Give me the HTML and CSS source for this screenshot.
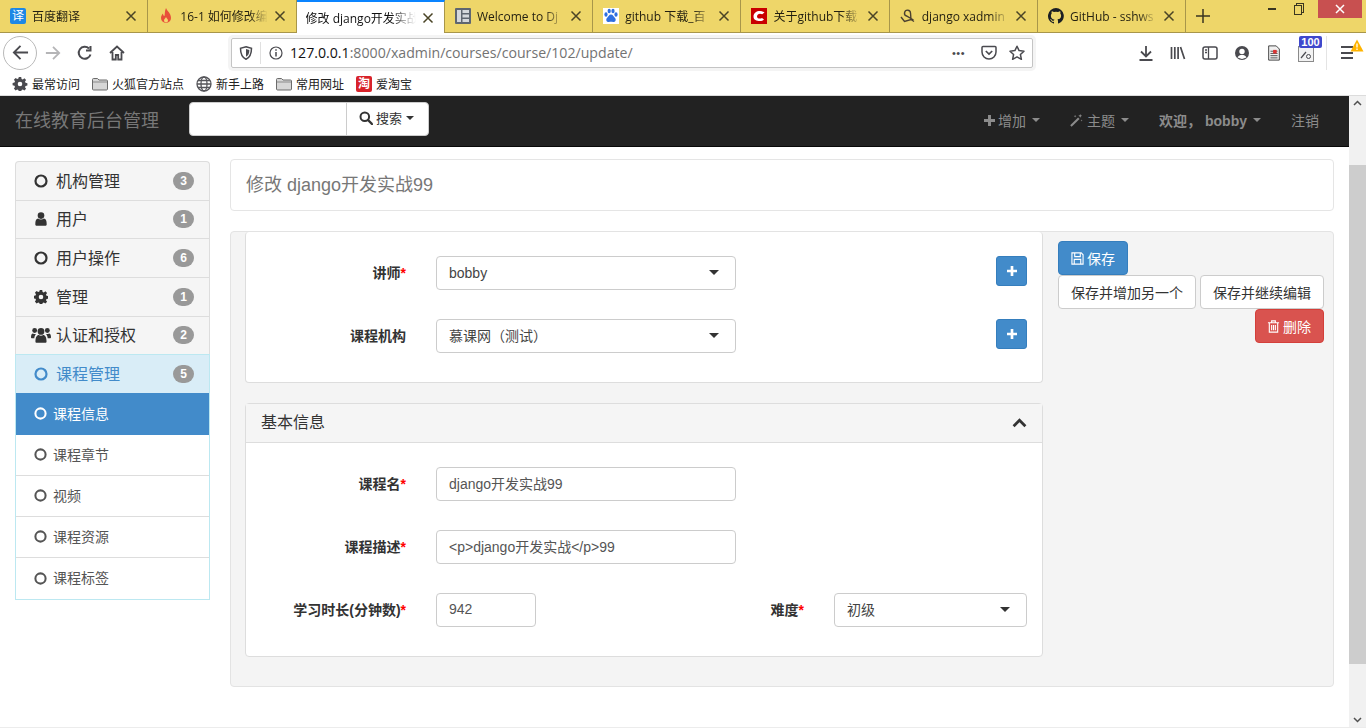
FILE: index.html
```html
<!DOCTYPE html>
<html lang="zh-CN">
<head>
    <meta charset="UTF-8">
    <title>修改 django开发实战99</title>
    <link rel="stylesheet" href="styles.css">
</head>
<body>
    <svg class="sprites" width="0" height="0">
        <symbol id="i-close" viewBox="0 0 12 12"><path d="M1.500 1.500l9 9M10.500 1.500l-9 9" fill="none" stroke="currentColor" stroke-width="1.500"/></symbol>
        <symbol id="i-circle" viewBox="0 0 14 14"><circle cx="7" cy="7" r="5.500" fill="none" stroke="currentColor" stroke-width="2.200"/></symbol>
        <symbol id="i-user" viewBox="0 0 12 14"><circle cx="6" cy="3.600" r="3.300" fill="currentColor"/><path d="M.3 12.200c0-3.600.9-5.400 2.800-5.600.8.600 1.800 1 2.900 1s2.100-.4 2.900-1c1.900.2 2.800 2 2.800 5.600 0 1-.7 1.600-1.700 1.600H2c-1 0-1.700-.6-1.700-1.600z" fill="currentColor"/></symbol>
        <symbol id="i-cog" viewBox="0 0 14 14"><path fill-rule="evenodd" fill="currentColor" d="M5.800 0h2.400l.4 1.900 1.200.5 1.600-1.100 1.700 1.700-1.100 1.600.5 1.200 1.900.4v2.400l-1.900.4-.5 1.200 1.100 1.600-1.700 1.700-1.600-1.100-1.200.5-.4 1.900H5.800l-.4-1.900-1.200-.5-1.600 1.100L.9 11.500 2 9.900l-.5-1.200L-.4 8.300V5.900l1.900-.4.5-1.200L.9 2.700 2.600 1l1.600 1.100 1.200-.5zM7 4.700a2.300 2.300 0 1 0 0 4.600 2.300 2.300 0 0 0 0-4.600z"/></symbol>
        <symbol id="i-users" viewBox="0 0 18 14"><g fill="currentColor"><circle cx="3.300" cy="3" r="2.200"/><circle cx="14.700" cy="3" r="2.200"/><circle cx="9" cy="3.800" r="3"/><path d="M4 13c0-4 1.200-6 3-6 .6.400 1.300.6 2 .6s1.400-.2 2-.6c1.800 0 3 2 3 6 0 .6-.5 1-1.200 1H5.200C4.500 14 4 13.600 4 13z"/><path d="M0 9c0-2 .6-3.400 1.800-3.400.5.300 1 .5 1.700.5l1 .3C3.600 7.300 3 8.500 3 10H1C.4 10 0 9.600 0 9zM18 9c0-2-.6-3.400-1.800-3.400-.5.300-1 .5-1.700.5l-1 .3c.9.900 1.500 2.100 1.500 3.600h2c.6 0 1-.4 1-1z"/></g></symbol>
        <symbol id="i-plus" viewBox="0 0 12 12"><path d="M4.400 0h3.200v4.400H12v3.200H7.600V12H4.400V7.600H0V4.400h4.400z" fill="currentColor"/></symbol>
        <symbol id="i-search" viewBox="0 0 14 14"><circle cx="5.800" cy="5.800" r="4.300" fill="none" stroke="currentColor" stroke-width="2"/><path d="M9 9l4 4" stroke="currentColor" stroke-width="2.400" stroke-linecap="round"/></symbol>
        <symbol id="i-folder" viewBox="0 0 16 14"><path d="M.5 2.500c0-.6.4-1 1-1h4L7 3h7.500c.6 0 1 .4 1 1v8c0 .6-.4 1-1 1h-13c-.6 0-1-.4-1-1z" fill="#d6d6d6" stroke="#6b6b6b"/><path d="M1 5h14" stroke="#8a8a8a"/></symbol>
    </svg>

    <div class="tabbar">
        <div class="tab">
            <span class="favicon fav-translate">译</span>
            <span class="tab-title">百度翻译</span>
            <svg class="tab-close"><use href="#i-close"/></svg>
        </div>
        <div class="tab">
            <svg class="favicon" viewBox="0 0 16 16"><path d="M8 0c1 3 5 5 5 10a5 5 0 0 1-10 0c0-2 1-3.500 2-4.500 0 1.500.5 2.500 1.500 2.500C7 6 6.500 3 8 0z" fill="#e8503a"/><path d="M8 9c.5 1.500 2 2 2 3.500a2 2 0 0 1-4 0C6 11 7.500 10.500 8 9z" fill="#f5d76e"/></svg>
            <span class="tab-title">16-1 如何修改编</span>
            <svg class="tab-close"><use href="#i-close"/></svg>
        </div>
        <div class="tab tab-active">
            <span class="tab-title">修改 django开发实战</span>
            <svg class="tab-close"><use href="#i-close"/></svg>
        </div>
        <div class="tab">
            <svg class="favicon" viewBox="0 0 16 16"><rect width="16" height="16" rx="1" fill="#5f6670"/><path d="M2 2h4v12H2zM7.500 2H14v3H7.500zM7.500 6.500H14v3H7.500zM7.500 11H14v3H7.500z" fill="#d5d8dc"/></svg>
            <span class="tab-title">Welcome to Dj</span>
            <svg class="tab-close"><use href="#i-close"/></svg>
        </div>
        <div class="tab">
            <svg class="favicon" viewBox="0 0 16 16"><rect width="16" height="16" fill="#fff"/><g fill="#2f6fe0"><ellipse cx="3" cy="6.500" rx="1.600" ry="2.200"/><ellipse cx="6.200" cy="3" rx="1.600" ry="2.300"/><ellipse cx="10" cy="3" rx="1.600" ry="2.300"/><ellipse cx="13" cy="6.500" rx="1.600" ry="2.200"/><path d="M8 6.500c2 0 2.500 2 4 3.500s.5 4.500-2 4c-1-.2-3-.2-4 0-2.500.5-3.500-2.500-2-4S6 6.500 8 6.500z"/></g></svg>
            <span class="tab-title">github 下载_百</span>
            <svg class="tab-close"><use href="#i-close"/></svg>
        </div>
        <div class="tab">
            <svg class="favicon" viewBox="0 0 16 16"><rect width="16" height="16" fill="#c90000"/><path d="M13.500 4.500C12 3.500 10.500 3 9 3 5.500 3 2.500 5 2.500 8.500S5.500 13 9 13c1.500 0 3-.5 4-1.500l-2-1.500c-.7.400-1.300.6-2 .6-1.500 0-3-.7-3-2.200S7.500 5.700 9 5.700c.7 0 1.500.2 2.200.6z" fill="#fff"/></svg>
            <span class="tab-title">关于github下载</span>
            <svg class="tab-close"><use href="#i-close"/></svg>
        </div>
        <div class="tab">
            <svg class="favicon" viewBox="0 0 16 16"><path d="M1 9l3.500 4.500L11 11.500l3 2M11 11.500L10.500 5A3 3 0 1 0 6.500 8l7 4" fill="none" stroke="#4a4030" stroke-width="1.400"/></svg>
            <span class="tab-title">django xadmin</span>
            <svg class="tab-close"><use href="#i-close"/></svg>
        </div>
        <div class="tab">
            <svg class="favicon" viewBox="0 0 16 16"><path fill="#1b1f23" d="M8 0a8 8 0 0 0-2.500 15.600c.4.100.5-.2.500-.4v-1.400c-2.200.5-2.700-1-2.700-1-.4-.9-.9-1.200-.9-1.200-.7-.5.1-.5.1-.5.800.1 1.200.8 1.200.8.700 1.200 1.900.9 2.300.7.100-.5.300-.9.500-1.100-1.800-.2-3.600-.9-3.600-4 0-.9.300-1.600.8-2.100-.1-.2-.4-1 .1-2.100 0 0 .7-.2 2.200.8a7.600 7.600 0 0 1 4 0c1.500-1 2.200-.8 2.200-.8.400 1.100.2 1.900.1 2.100.5.600.8 1.300.8 2.100 0 3.100-1.900 3.700-3.700 3.900.3.300.6.800.6 1.500v2.200c0 .2.100.5.600.4A8 8 0 0 0 8 0z"/></svg>
            <span class="tab-title">GitHub - sshws</span>
            <svg class="tab-close"><use href="#i-close"/></svg>
        </div>
        <svg class="new-tab" viewBox="0 0 14 14"><path d="M7 0v14M0 7h14" stroke="#3a3520" stroke-width="1.500"/></svg>
        <div class="window-btns">
            <span class="win-min"></span>
            <span class="win-max"></span>
            <span class="win-close"><svg viewBox="0 0 10 10"><path d="M1 1l8 8M9 1l-8 8" stroke="#fff" stroke-width="1.500"/></svg></span>
        </div>
    </div>

    <div class="toolbar">
        <div class="back-btn">
            <svg viewBox="0 0 18 18"><path d="M17 9H2M9 2L2 9l7 7" fill="none" stroke="#4a4a4f" stroke-width="2"/></svg>
        </div>
        <svg class="tool-icon forward" viewBox="0 0 18 18"><path d="M1 9h15M9 2l7 7-7 7" fill="none" stroke="#b5b5b7" stroke-width="2"/></svg>
        <svg class="tool-icon" viewBox="0 0 16 16"><path d="M13.500 9.500A6 6 0 1 1 12 3.500M13.500 1v4.500H9" fill="none" stroke="#4a4a4f" stroke-width="2"/></svg>
        <svg class="tool-icon" viewBox="0 0 16 16"><path d="M1 8l7-6.500L15 8M3.500 7v7.500h3.300V10h2.400v4.500h3.300V7" fill="none" stroke="#4a4a4f" stroke-width="1.800"/></svg>
        <div class="urlbar">
            <svg class="url-shield" viewBox="0 0 14 14"><path d="M7 .8l5.500 1.500c0 5-1 9-5.500 11C2.500 11.300 1.500 7.300 1.500 2.300z" fill="none" stroke="#4a4a4f" stroke-width="1.500"/><path d="M7 3l3.300.9c0 3-.6 5.500-3.300 6.800z" fill="#4a4a4f"/></svg>
            <span class="url-sep"></span>
            <svg class="url-info" viewBox="0 0 14 14"><circle cx="7" cy="7" r="6" fill="none" stroke="#4a4a4f" stroke-width="1.200"/><path d="M7 6v4.500M7 3.200v1.500" stroke="#4a4a4f" stroke-width="1.500"/></svg>
            <span class="url-text"><b>127.0.0.1</b>:8000/xadmin/courses/course/102/update/</span>
            <span class="url-dots">•••</span>
            <svg class="url-icon" viewBox="0 0 16 16"><path d="M1 2.500c0-.6.4-1 1-1h12c.6 0 1 .4 1 1V7a7 7 0 0 1-14 0z" fill="none" stroke="#4a4a4f" stroke-width="1.500"/><path d="M4.800 6L8 9l3.200-3" fill="none" stroke="#4a4a4f" stroke-width="1.700"/></svg>
            <svg class="url-icon" viewBox="0 0 16 16"><path d="M8 1.200l2.100 4.400 4.900.6-3.600 3.300 1 4.800L8 11.900l-4.400 2.400 1-4.800L1 6.200l4.900-.6z" fill="none" stroke="#4a4a4f" stroke-width="1.500" stroke-linejoin="round"/></svg>
        </div>
        <div class="tool-right">
            <svg class="tool-icon" viewBox="0 0 16 16"><path d="M8 1v10M3 6.500l5 5 5-5M1.500 15h13" fill="none" stroke="#4a4a4f" stroke-width="1.800"/></svg>
            <svg class="tool-icon" viewBox="0 0 16 16"><path d="M1.500 2v12M4.800 2v12M8.100 2v12M10.500 2l4 12" fill="none" stroke="#4a4a4f" stroke-width="1.700"/></svg>
            <svg class="tool-icon" viewBox="0 0 16 16"><rect x="1" y="2" width="14" height="12" rx="2" fill="none" stroke="#4a4a4f" stroke-width="1.500"/><path d="M6.500 2v12M3 5h2M3 7.500h2" stroke="#4a4a4f" stroke-width="1.300"/></svg>
            <svg class="tool-icon" viewBox="0 0 16 16"><circle cx="8" cy="8" r="7" fill="#4a4a4f"/><circle cx="8" cy="6.500" r="2.700" fill="#fff"/><path d="M3.500 12.500C4.500 10.500 6 10 8 10s3.500.5 4.500 2.500L8 14z" fill="#fff"/></svg>
            <svg class="tool-icon" viewBox="0 0 14 18"><path d="M1 1h8.500L13 4.500V17H1z" fill="#f0f0f0" stroke="#333"/><path d="M3 7h8M3 9.500h8M3 12h8M3 14.500h8" stroke="#444"/><rect x="6" y="5.500" width="4" height="4" fill="#d33"/></svg>
            <div class="badge-icon">
                <svg viewBox="0 0 16 16"><rect x=".5" y=".5" width="15" height="15" fill="#f2f2f2" stroke="#8a8a8a"/><path d="M3 12l5-6" stroke="#4a4a4f" stroke-width="1.200"/><circle cx="10.500" cy="10.500" r="2" fill="none" stroke="#4a4a4f"/></svg>
                <span class="badge-count">100</span>
            </div>
            <span class="tool-sep"></span>
            <div class="menu-icon">
                <span></span><span></span><span></span>
                <svg class="menu-warn" viewBox="0 0 14 13"><path d="M7 .5l6.500 12H.5z" fill="#ffb400"/><path d="M7 4.500v4M7 9.500V11" stroke="#fff" stroke-width="1.300"/></svg>
            </div>
        </div>
    </div>

    <div class="bookmarks">
        <span class="bookmark"><svg class="cog-mark"><use href="#i-cog"/></svg>最常访问</span>
        <span class="bookmark"><svg class="folder"><use href="#i-folder"/></svg>火狐官方站点</span>
        <span class="bookmark"><svg class="folder" viewBox="0 0 16 16"><g fill="none" stroke="#55555a" stroke-width="1.300"><circle cx="8" cy="8" r="7"/><ellipse cx="8" cy="8" rx="3" ry="7"/><path d="M1 8h14M2 4.500h12M2 11.500h12"/></g></svg>新手上路</span>
        <span class="bookmark"><svg class="folder"><use href="#i-folder"/></svg>常用网址</span>
        <span class="bookmark"><span class="fav-taobao">淘</span>爱淘宝</span>
    </div>

    <div class="viewport">
        <div class="page">
            <nav class="navbar">
                <a class="brand">在线教育后台管理</a>
                <div class="nav-search">
                    <input class="nav-search-input" type="text">
                    <span class="nav-search-btn"><svg class="icon-search"><use href="#i-search"/></svg>搜索<i class="caret"></i></span>
                </div>
                <ul class="nav-right">
                    <li><svg class="icon-nav"><use href="#i-plus"/></svg>增加<i class="caret"></i></li>
                    <li><svg class="icon-wand" viewBox="0 0 14 14"><path d="M1 13L9.500 4.500" stroke="currentColor" stroke-width="2.200"/><path d="M11 0l.6 1.400L13 2l-1.400.6L11 4l-.6-1.400L9 2l1.400-.6zM5.500 1l.4 1 1 .4-1 .4-.4 1-.4-1-1-.4 1-.4zM12.500 6l.3.8.8.3-.8.3-.3.8-.3-.8-.8-.3.8-.3z" fill="currentColor"/></svg>主题<i class="caret"></i></li>
                    <li class="nav-user">欢迎， bobby<i class="caret"></i></li>
                    <li>注销</li>
                </ul>
            </nav>

            <div class="container">
                <aside class="sidebar">
                    <a class="menu-item"><svg class="menu-ico"><use href="#i-circle"/></svg><span class="menu-label">机构管理</span><span class="count">3</span></a>
                    <a class="menu-item"><svg class="menu-ico"><use href="#i-user"/></svg><span class="menu-label">用户</span><span class="count">1</span></a>
                    <a class="menu-item"><svg class="menu-ico"><use href="#i-circle"/></svg><span class="menu-label">用户操作</span><span class="count">6</span></a>
                    <a class="menu-item"><svg class="menu-ico"><use href="#i-cog"/></svg><span class="menu-label">管理</span><span class="count">1</span></a>
                    <a class="menu-item"><svg class="menu-ico menu-ico-wide"><use href="#i-users"/></svg><span class="menu-label">认证和授权</span><span class="count">2</span></a>
                    <a class="menu-item menu-open"><svg class="menu-ico"><use href="#i-circle"/></svg><span class="menu-label">课程管理</span><span class="count">5</span></a>
                    <div class="submenu">
                        <a class="sub-item sub-active"><svg class="sub-ico"><use href="#i-circle"/></svg><span class="sub-label">课程信息</span></a>
                        <a class="sub-item"><svg class="sub-ico"><use href="#i-circle"/></svg><span class="sub-label">课程章节</span></a>
                        <a class="sub-item"><svg class="sub-ico"><use href="#i-circle"/></svg><span class="sub-label">视频</span></a>
                        <a class="sub-item"><svg class="sub-ico"><use href="#i-circle"/></svg><span class="sub-label">课程资源</span></a>
                        <a class="sub-item"><svg class="sub-ico"><use href="#i-circle"/></svg><span class="sub-label">课程标签</span></a>
                    </div>
                </aside>

                <main class="content">
                    <div class="page-title">修改 django开发实战99</div>
                    <div class="form-well">
                        <div class="form-main">
                            <section class="panel panel-first">
                                <div class="panel-body">
                                    <div class="form-row">
                                        <label class="form-label">讲师<em>*</em></label>
                                        <div class="select">bobby<i class="select-caret"></i></div>
                                        <span class="add-btn"><svg><use href="#i-plus"/></svg></span>
                                    </div>
                                    <div class="form-row">
                                        <label class="form-label">课程机构</label>
                                        <div class="select">慕课网（测试）<i class="select-caret"></i></div>
                                        <span class="add-btn"><svg><use href="#i-plus"/></svg></span>
                                    </div>
                                </div>
                            </section>
                            <section class="panel">
                                <header class="panel-head"><span class="panel-title">基本信息</span>
                                    <svg viewBox="0 0 14 9"><path d="M1.500 7.500L7 2l5.500 5.500" fill="none" stroke="#333" stroke-width="2.600"/></svg>
                                </header>
                                <div class="panel-body">
                                    <div class="form-row">
                                        <label class="form-label">课程名<em>*</em></label>
                                        <input class="field" type="text" value="django开发实战99">
                                    </div>
                                    <div class="form-row">
                                        <label class="form-label">课程描述<em>*</em></label>
                                        <input class="field" type="text" value="<p>django开发实战</p>99">
                                    </div>
                                    <div class="form-row">
                                        <label class="form-label">学习时长(分钟数)<em>*</em></label>
                                        <input class="field field-short" type="text" value="942">
                                        <label class="form-label form-label-right">难度<em>*</em></label>
                                        <div class="select select-right">初级<i class="select-caret"></i></div>
                                    </div>
                                </div>
                            </section>
                        </div>
                        <div class="form-actions">
                            <div class="action-row">
                                <span class="btn btn-primary"><svg viewBox="0 0 14 14"><path d="M1 1h10l2 2v10H1zM4 1v4h6V1M3.500 13V8h7v5" fill="none" stroke="#fff" stroke-width="1.200"/></svg>保存</span>
                            </div>
                            <div class="action-row action-gap">
                                <span class="btn btn-default">保存并增加另一个</span>
                                <span class="btn btn-default">保存并继续编辑</span>
                            </div>
                            <div class="action-row action-end">
                                <span class="btn btn-danger"><svg viewBox="0 0 14 14"><path d="M1 3h12M5 3V1h4v2M2.500 3v10h9V3M5 5.500V11M7 5.500V11M9 5.500V11" fill="none" stroke="#fff" stroke-width="1.200"/></svg>删除</span>
                            </div>
                        </div>
                    </div>
                </main>
            </div>
        </div>
        <div class="scrollbar">
            <svg viewBox="0 0 9 6"><path d="M1 5l3.500-3.500L8 5" fill="none" stroke="#505050" stroke-width="1.500"/></svg>
            <div class="scroll-thumb"></div>
            <svg viewBox="0 0 9 6"><path d="M1 1l3.500 3.500L8 1" fill="none" stroke="#505050" stroke-width="1.500"/></svg>
        </div>
    </div>
</body>
</html>
```

FILE: styles.css
```css
* { box-sizing: border-box; }
html, body { margin: 0; height: 728px; overflow: hidden; }
body { font-family: "Liberation Sans", "Noto Sans CJK SC", sans-serif; font-size: 14px; color: #333; background: #fff; }
.sprites { position: absolute; }
a { display: block; }
svg { display: block; flex: none; }

/* browser chrome */
.tabbar { display: flex; align-items: center; height: 33px; background: #eed669; border-bottom: 1px solid #a8964a; font-family: "Open Sans", "Noto Sans CJK SC", sans-serif; font-size: 12px; color: #221f10; }
.tab { display: flex; align-items: center; width: 148.3px; height: 32px; padding: 0 10px; border-right: 1px solid #a8964a; }
.tab-title { flex: 1; min-width: 0; margin-left: 6px; white-space: nowrap; overflow: hidden; -webkit-mask-image: linear-gradient(to right, #000 78%, transparent 100%); mask-image: linear-gradient(to right, #000 78%, transparent 100%); }
.favicon { width: 16px; height: 16px; flex: none; }
.fav-translate { border-radius: 2px; background: #1e88e5; color: #fff; font-size: 12px; line-height: 16px; text-align: center; }
.tab-close { width: 12px; height: 12px; margin-left: 6px; color: #4a4426; }
.tab-active { background: #fff; border-top: 2px solid #0a84ff; width: 148.3px; height: 33px; color: #111; margin-bottom: -1px; padding-left: 9px; }
.tab-active .tab-title { margin-left: 0; }
.new-tab { width: 14px; height: 14px; margin-left: 10px; }
.window-btns { display: flex; align-self: flex-start; margin-left: auto; margin-right: 4px; }
.window-btns span { display: flex; align-items: center; justify-content: center; height: 18px; }
.win-min { width: 8px; margin-right: 18px; }
.win-min::before { content: ""; width: 8px; height: 2px; margin-top: -1px; background: #3a3520; }
.win-max { width: 10px; margin-right: 14px; position: relative; }
.win-max::before { content: ""; width: 9px; height: 8px; margin: 2px 2px 0 0; border: 1px solid #3a3520; box-shadow: 2px -2px 0 -1px #eed669, 2px -2px 0 0 #3a3520; }
.win-close { width: 44px; background: #c85050; }
.win-close svg { width: 10px; height: 10px; }

.toolbar { display: flex; align-items: center; height: 39px; padding-left: 3px; background: #fff; }
.back-btn { display: flex; align-items: center; justify-content: center; width: 34px; height: 34px; border: 1px solid #b9b9b9; border-radius: 50%; }
.back-btn svg { width: 17px; height: 17px; }
.tool-icon { width: 16px; height: 16px; }
.forward { margin: 0 0 0 8px; }
.toolbar > .tool-icon + .tool-icon { margin-left: 16px; }
.urlbar { display: flex; align-items: center; width: 802px; height: 30px; margin-left: 106px; padding: 0 7px; border: 1px solid #c4c4c4; border-radius: 2px; box-shadow: 0 0 0 3px #f4f4f4; font-size: 14.15px; color: #737373; }
.url-shield, .url-info { width: 14px; height: 14px; }
.url-sep { width: 1px; height: 22px; margin: 0 8px 0 7px; background: #e0e0e0; }
.url-text { flex: 1; margin-left: 7px; font-family: "Open Sans", sans-serif; }
.url-text b { font-weight: 400; color: #111; }
.url-dots { margin-right: 6px; font-size: 11px; letter-spacing: .5px; color: #4a4a4f; }
.url-icon { width: 16px; height: 16px; margin-left: 10px; margin-right: 1px; }
.url-icon + .url-icon { margin-left: 11px; margin-right: 0; }
.tool-right { display: flex; align-items: center; margin-left: 105px; }
.tool-right > .tool-icon { margin-right: 16px; }
.badge-icon { position: relative; width: 16px; height: 16px; }
.badge-icon svg { width: 16px; height: 16px; margin-top: 1px; }
.badge-count { position: absolute; left: 1px; top: -9px; width: 23px; height: 12px; border-radius: 2px; background: #3f48cc; color: #fff; font-size: 11px; font-weight: 700; line-height: 12px; text-align: center; }
.tool-sep { width: 1px; height: 34px; margin-left: 12px; background: #e4e4e4; }
.menu-icon { position: relative; display: flex; flex-direction: column; gap: 3.500px; width: 12px; margin-left: 14px; }
.menu-icon span { height: 2px; background: #4a4a4f; }
.menu-warn { position: absolute; left: 9px; top: -7px; width: 14px; height: 13px; }

.bookmarks { display: flex; height: 23px; padding-left: 12px; gap: 12px; align-items: center; font-size: 12px; color: #222; background: #fff; }
.bookmark { display: flex; align-items: center; gap: 4px; }
.cog-mark { width: 16px; height: 14px; color: #4a4a4f; }
.folder { width: 16px; height: 16px; }
.fav-taobao { width: 16px; height: 16px; border-radius: 2px; background: #d8232a; color: #fff; font-size: 12px; font-weight: 700; line-height: 16px; text-align: center; }

.viewport { display: flex; height: 633px; border-top: 1px solid #dcdcdc; border-bottom: 1px solid #ececec; }
.page { flex: 1; min-width: 0; }

.scrollbar { display: flex; flex-direction: column; align-items: center; justify-content: space-between; width: 17px; padding-top: 4px; background: #f1f1f1; }
.scrollbar svg { width: 9px; height: 6px; }
.scrollbar svg:last-child { margin-bottom: 4px; }
.scroll-thumb { width: 17px; height: 499px; margin-top: 59px; margin-bottom: auto; background: #cdcdcd; }

/* navbar */
.navbar { display: flex; align-items: center; height: 51px; background: #222; border-bottom: 1px solid #080808; color: #8c8c8c; }
.brand { width: 189px; padding: 0 0 4px 15px; font-size: 18px; color: #777; }
.nav-search { display: flex; width: 240px; height: 34px; margin-top: -5px; background: #fff; border: 1px solid #ccc; border-radius: 4px; }
.nav-search-input { width: 156px; height: 32px; padding: 0; border: 0; background: transparent; }
.nav-search-btn { display: flex; align-items: center; flex: 1; padding: 0 0 2px 12px; border-left: 1px solid #ccc; color: #333; font-size: 13px; }
.icon-search { width: 14px; height: 14px; margin-right: 3px; }
.caret { display: inline-block; width: 0; height: 0; margin-left: 4px; border-top: 4px solid; border-left: 4px solid transparent; border-right: 4px solid transparent; }
.nav-right { display: flex; margin: 0 15px 0 auto; padding: 0; list-style: none; }
.nav-right li { display: flex; align-items: center; height: 50px; padding: 0 15px 2px; }
.nav-right .caret { margin-left: 6px; }
.icon-nav { width: 11px; height: 11px; margin-right: 3px; }
.icon-wand { width: 13px; height: 13px; margin-right: 4px; }
.nav-user { font-weight: 700; }

/* layout */
.container { display: flex; padding: 12px 15px 0; }

/* sidebar */
.sidebar { width: 195px; margin-top: 2px; margin-right: 20px; }
.menu-item { display: flex; align-items: center; height: 38.67px; padding: 0 15px 0 18px; background: #f5f5f5; border: 1px solid #ddd; border-bottom: 0; font-size: 16px; color: #333; }
.menu-item:first-child { border-radius: 4px 4px 0 0; }
.menu-ico { width: 14px; height: 14px; margin-right: 8px; }
.menu-ico-wide { width: 20px; height: 16px; margin-left: -3px; margin-right: 5px; }
.menu-label { flex: 1; position: relative; top: -1px; }
.count { width: 21px; height: 18px; border-radius: 10px; background: #999; color: #fff; font-size: 12px; font-weight: 700; line-height: 18px; text-align: center; }
.menu-open { background: #d9edf7; border-color: #bce8f1; color: #428bca; }
.submenu { border: 1px solid #bce8f1; border-top: 0; }
.sub-item { display: flex; align-items: center; height: 41px; padding-left: 18px; border-bottom: 1px solid #ddd; color: #555; }
.sub-item:last-child { border-bottom: 0; }
.sub-active { height: 42px; background: #428bca; color: #fff; border-bottom: 0; }
.sub-ico { width: 13px; height: 13px; margin-right: 6px; }
.sub-label { position: relative; top: -1px; }

/* main */
.content { flex: 1; min-width: 0; }
.page-title { height: 52px; padding: 0 15px; background: #fff; border: 1px solid #e5e5e5; border-radius: 4px; font-size: 18px; line-height: 50px; color: #777; }
.form-well { display: flex; height: 456px; margin-top: 20px; padding: 0 9px 0 14px; background: #f4f4f4; border: 1px solid #e3e3e3; border-radius: 4px; }
.form-main { width: 798px; margin-right: 15px; }
.panel { margin-bottom: 20px; background: #fff; border: 1px solid #ddd; border-radius: 4px; }
.panel-first { border-top: 0; }
.panel-head { display: flex; align-items: center; justify-content: space-between; height: 39px; padding: 0 15px; background: #f5f5f5; border-bottom: 1px solid #ddd; font-size: 16px; color: #333; }
.panel-title { position: relative; top: -2px; }
.panel-head svg { width: 15px; height: 10px; }
.panel-body { display: flex; flex-direction: column; gap: 29px; padding: 24px 15px 29px 0; }
.form-row { display: flex; align-items: flex-start; }
.form-label { width: 160px; margin-right: 30px; font-weight: 700; line-height: 34px; text-align: right; font-size: 14px; white-space: nowrap; }
.form-label em { font-style: normal; color: #f00; }
.form-label-right { flex: none; width: 268px; margin-right: 30px; }
.field, .select { width: 300px; height: 34px; padding: 0 12px; background: #fff; border: 1px solid #ccc; border-radius: 4px; color: #555; font: 14px/32px "Liberation Sans", "Noto Sans CJK SC", sans-serif; }
.field { padding-bottom: 2px; }
.field-short { width: 100px; }
.select { position: relative; color: #444; }
.select-right { width: 193px; }
.select-caret { position: absolute; right: 16px; top: 13px; border-top: 5px solid #333; border-left: 5px solid transparent; border-right: 5px solid transparent; }
.add-btn { display: flex; align-items: center; justify-content: center; width: 31px; height: 30px; margin-left: auto; background: #428bca; border: 1px solid #357ebd; border-radius: 3px; color: #fff; }
.add-btn svg { width: 10px; height: 10px; }

/* actions */
.form-actions { display: flex; flex-direction: column; flex: 1; padding-top: 9px; }
.action-row { display: flex; }
.action-gap { gap: 4px; }
.action-end { justify-content: flex-end; }
.btn { display: flex; align-items: center; justify-content: center; gap: 3px; height: 34px; padding: 0 12px; border: 1px solid #ccc; border-radius: 4px; font-size: 14px; white-space: nowrap; }
.btn svg { width: 13px; height: 13px; }
.btn-default { background: #fff; color: #333; }
.btn-primary { background: #428bca; border-color: #357ebd; color: #fff; }
.btn-danger { background: #d9534f; border-color: #d43f3a; color: #fff; padding: 0 12px 0 11px; }
```
